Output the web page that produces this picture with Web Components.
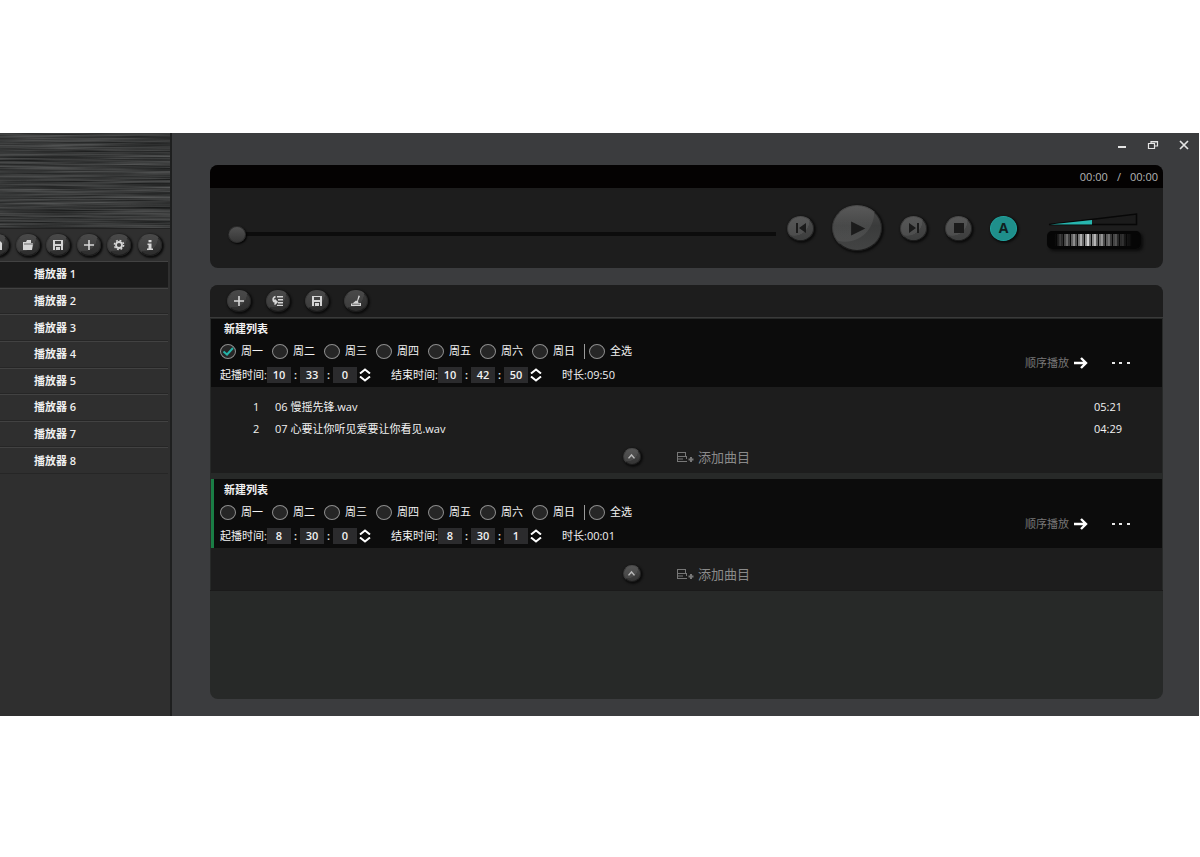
<!DOCTYPE html>
<html lang="zh-CN">
<head>
<meta charset="utf-8">
<title>播放器</title>
<style>
    * {
        box-sizing: border-box;
    }
    html {
        height: 100%;
    }
    body {
        margin: 0;
        height: 100%;
        padding: 133px 1px 141px 0;
        background: #fff;
        display: flex;
        font: 11px/16px "Open Sans", "Noto Sans CJK SC", sans-serif;
        color: #f2f2f2;
        --accent: #1f8f8b;
        --panel: #1d1d1d;
        --active: #1a7d45;
    }
</style>
</head>
<body>
<x-player-app></x-player-app>

<script>
const ICONS = {
    file: '<path d="M1 1h7l3 3v7H1z"/>',
    folder: '<path d="M1 3h3l1-2h4v3h2v1l-1 6H1z"/><path d="M2 5h9" stroke="#3a3a3a" stroke-width=".7"/>',
    save: '<path fill-rule="evenodd" d="M1 1h10v10H1zM3 2v3h6V2zM3 7v4h1V8h4v3h1V7z"/>',
    plus: '<path d="M5.200 1h1.600v4.200H11v1.600H6.800V11H5.200V6.800H1V5.200h4.200z"/>',
    gear: '<circle cx="6" cy="6" r="3" fill="none" stroke="currentColor" stroke-width="1.800"/><circle cx="6" cy="6" r="4.600" fill="none" stroke="currentColor" stroke-width="1.500" stroke-dasharray="1.800 1.812"/>',
    info: '<path d="M4.500 1h3v2.200h-3zM3.500 4.500h4v5H9V11H3V9.500h1.500V6h-1z"/>',
    indent: '<path d="M5 1h6v1.500H5zM6 4h5v1.500H6zM6 7h5v1.500H6zM5 9.800h6V11H5z"/><path d="M3.500 1.500C0 3 .5 7 4 7M2.500 4.500L5 7 2.500 9.500" fill="none" stroke="currentColor" stroke-width="1.600"/>',
    brush: '<path d="M8.500.5l1.500.5-2 5 .5 2H11v3H1V8.500h1.500L6 5.500l1 .5z"/><path d="M2 9.200h8" stroke="#333" stroke-width=".7"/>',
    prev: '<path d="M1 1h2v10H1zM11 1v10L4 6z"/>',
    play: '<path d="M1.500 1L11.500 6l-10 5z"/>',
    next: '<path d="M9 1h2v10H9zM1 1v10l7-5z"/>',
    stop: '<path d="M1 1h10v10H1z"/>',
    up: '<path d="M2 8.500L6 4l4 4.500" fill="none" stroke="currentColor" stroke-width="2"/>'
};

class RoundButton extends HTMLElement {
    constructor() {
        super();
        this.attachShadow({mode: 'open'});
    }

    connectedCallback() {
        const icon = this.getAttribute('icon');
        // the auto button carries a letter, every other one a drawing
        const face = icon === 'auto' ? 'A' : `<svg viewBox="0 0 12 12" fill="currentColor">${ICONS[icon]}</svg>`;

        this.shadowRoot.innerHTML = `
            <style>
            :host {
                display: block;
                flex: none;
                width: 24px;
                height: 22px;
                --icon: 12px;
                --face: linear-gradient(#3b3b3b, #2d2d2d);
                --ink: #d6d6d6;
            }
            :host([size="tiny"]) {
                width: 18px;
                height: 17px;
                --icon: 9px;
                --face: linear-gradient(#484848, #343434);
                --ink: #b8b8b8;
            }
            :host([size="medium"]) {
                width: 27px;
                height: 25px;
                --icon: 12px;
                --face: linear-gradient(#4a4a4a, #3d3e3e);
                --ink: #1b1b1b;
            }
            :host([size="large"]) {
                width: 50px;
                height: 46px;
                --icon: 17px;
                --face: linear-gradient(#4c4c4c, #3a3b3b 45%, #434444);
                --ink: #1b1b1b;
            }
            button {
                display: grid;
                place-items: center;
                width: 100%;
                height: 100%;
                padding: 0;
                border: 1px solid;
                border-color: #4a4a4a #262626 #1c1c1c #3a3a3a;
                border-radius: 50%;
                color: var(--ink);
                font: 700 14px/20px "Open Sans", sans-serif;
                background: radial-gradient(circle at 25% 15%, rgba(255, 255, 255, .07) 55%, transparent 57%), var(--face);
                box-shadow: 1px 1px 2px 1px #0c0c0c;
            }
            :host([icon="auto"]) button {
                border-color: #22a39e;
                background: var(--accent);
                color: #10201f;
            }
            svg {
                width: var(--icon);
                height: var(--icon);
            }
            </style>
            <button type="button" aria-label="${this.getAttribute('label')}">${face}</button>
        `;
    }
}

class WindowControls extends HTMLElement {
    constructor() {
        super();
        this.attachShadow({mode: 'open'});
        this.shadowRoot.innerHTML = `
            <style>
            :host {
                display: flex;
                justify-content: flex-end;
                gap: 15px;
                height: 28px;
                padding: 4px 7px 0 0;
            }
            button {
                width: 16px;
                height: 16px;
                padding: 2px;
                border: 0;
                background: none;
                color: #e4e4e4;
            }
            svg {
                display: block;
                width: 12px;
                height: 12px;
                fill: none;
                stroke: currentColor;
            }
            </style>
            <button type="button" aria-label="最小化"><svg viewBox="0 0 12 12"><path d="M2 8h8" stroke-width="2"/></svg></button>
            <button type="button" aria-label="还原"><svg viewBox="0 0 12 12"><path d="M1.500 4.500h6v5h-6zM4 4.500V2.500h6.500V7H8M4 3h6.500" stroke-width="1.200"/></svg></button>
            <button type="button" aria-label="关闭"><svg viewBox="0 0 12 12"><path d="M2 2l8 8M10 2l-8 8" stroke-width="1.700"/></svg></button>
        `;
    }
}

class PlayerSidebar extends HTMLElement {
    constructor() {
        super();
        this.attachShadow({mode: 'open'});
    }

    connectedCallback() {
        const count = Number(this.getAttribute('count'));
        const items = Array.from({length: count}, (_, i) => `
            <li><a href="#player-${i + 1}"${i === 0 ? ' aria-current="page"' : ''}>播放器 ${i + 1}</a></li>`).join('');

        this.shadowRoot.innerHTML = `
            <style>
            :host {
                display: flex;
                flex-direction: column;
                flex: none;
                width: 170px;
                overflow: hidden;
                background: #2f2f2f;
                border-right: 2px solid #1e1f1f;
            }
            .metal {
                display: block;
                width: 100%;
                height: 95px;
                border-bottom: 1px solid #222;
            }
            .tools {
                display: flex;
                justify-content: space-between;
                align-items: center;
                height: 32px;
                margin: 0 8px 0 -15px;
            }
            ul {
                display: grid;
                grid-auto-rows: 1fr;
                height: 213px;
                margin: 0;
                padding: 0 2px 0 0;
                list-style: none;
            }
            li {
                display: flex;
                border-top: 1px solid #424242;
                border-bottom: 1px solid #262626;
            }
            a {
                flex: 1;
                display: flex;
                align-items: center;
                padding-left: 34px;
                color: #f0f0f0;
                font-weight: 600;
                text-decoration: none;
            }
            a[aria-current] {
                background: #1b1b1b;
            }
            </style>
            <svg class="metal" preserveAspectRatio="none" aria-hidden="true">
                <filter id="brushed" x="0" y="0" width="100%" height="100%" color-interpolation-filters="sRGB">
                    <feTurbulence type="fractalNoise" baseFrequency="0.009 0.55" numOctaves="3" seed="7"/>
                    <feColorMatrix values=".36 0 0 0 .04  .36 0 0 0 .045  .36 0 0 0 .045  0 0 0 0 1"/>
                </filter>
                <rect width="100%" height="100%" filter="url(#brushed)"/>
            </svg>
            <div class="tools">
                <x-round-button icon="file" label="新建"></x-round-button>
                <x-round-button icon="folder" label="打开"></x-round-button>
                <x-round-button icon="save" label="保存"></x-round-button>
                <x-round-button icon="plus" label="添加"></x-round-button>
                <x-round-button icon="gear" label="设置"></x-round-button>
                <x-round-button icon="info" label="关于"></x-round-button>
            </div>
            <ul>${items}</ul>
        `;
    }
}

class VolumeWheel extends HTMLElement {
    constructor() {
        super();
        this.attachShadow({mode: 'open'});
        this.shadowRoot.innerHTML = `
            <style>
            :host {
                display: block;
                flex: none;
                width: 94px;
                padding-top: 4px;
            }
            svg {
                display: block;
                width: 92px;
                height: 14px;
                margin-bottom: 5px;
            }
            input {
                display: block;
                appearance: none;
                box-sizing: border-box;
                width: 94px;
                height: 18px;
                margin: 0;
                border-radius: 5px;
                background:
                    linear-gradient(90deg, #060606 6%, rgba(6, 6, 6, .6) 16%, transparent 44%, rgba(6, 6, 6, .5) 68%, #060606 92%),
                    repeating-linear-gradient(90deg, #0a0a0a 0 1px, #999 1px 3px, #d4d4d4 3px 5px, #6f6f6f 5px 7px);
                border: solid #060606;
                border-width: 3px 2px;
                box-shadow: 2px 2px 3px #0b0b0b;
            }
            input::-webkit-slider-thumb {
                appearance: none;
                width: 7px;
                height: 12px;
                background: transparent;
            }
            </style>
            <svg viewBox="0 0 92 14" aria-hidden="true">
                <path d="M2 12.500L89.500 2v10.500z" fill="#1b1b1b" stroke="#070707" stroke-width="1.500"/>
                <path d="M3 12.500L45 8v4.500z" fill="#27b5ae"/>
            </svg>
            <input type="range" min="0" max="100" value="50" aria-label="音量">
        `;
    }
}

class TransportPanel extends HTMLElement {
    constructor() {
        super();
        this.attachShadow({mode: 'open'});
        this.shadowRoot.innerHTML = `
            <style>
            :host {
                display: block;
                overflow: hidden;
                border-radius: 8px;
                background: var(--panel);
            }
            .clock {
                display: flex;
                justify-content: flex-end;
                align-items: center;
                gap: 9px;
                height: 23px;
                padding-right: 5px;
                background: #040202;
                color: #b4b4b4;
            }
            .controls {
                display: flex;
                align-items: center;
                gap: 18px;
                height: 80px;
                padding: 0 22px 0 18px;
            }
            .seek {
                flex: 1;
                appearance: none;
                height: 18px;
                margin: 12px -7px 0 0;
                background: linear-gradient(#0c0c0c, #0c0c0c) center / 100% 4px no-repeat;
            }
            .seek::-webkit-slider-thumb {
                appearance: none;
                width: 18px;
                height: 17px;
                border-radius: 50%;
                border: 1px solid #2c2c2c;
                background: linear-gradient(#515151, #363636);
                box-shadow: 1px 1px 2px #000;
            }
            x-volume-wheel {
                margin-left: 12px;
            }
            </style>
            <div class="clock"><span>00:00</span><span>/</span><span>00:00</span></div>
            <div class="controls">
                <input class="seek" type="range" min="0" max="100" value="0" aria-label="进度">
                <x-round-button size="medium" icon="prev" label="上一曲"></x-round-button>
                <x-round-button size="large" icon="play" label="播放"></x-round-button>
                <x-round-button size="medium" icon="next" label="下一曲"></x-round-button>
                <x-round-button size="medium" icon="stop" label="停止"></x-round-button>
                <x-round-button size="medium" icon="auto" label="自动"></x-round-button>
                <x-volume-wheel></x-volume-wheel>
            </div>
        `;
    }
}

class DayCheck extends HTMLElement {
    constructor() {
        super();
        this.attachShadow({mode: 'open'});
        this.shadowRoot.innerHTML = `
            <style>
            :host {
                display: block;
                width: 52px;
            }
            label {
                display: flex;
                align-items: center;
                gap: 5px;
                white-space: nowrap;
            }
            .box {
                display: grid;
            }
            .box > * {
                grid-area: 1 / 1;
            }
            input {
                appearance: none;
                box-sizing: border-box;
                width: 16px;
                height: 15px;
                margin: 0;
                border: 1px solid #8c8c8c;
                border-radius: 50%;
                background: #262626;
            }
            svg {
                width: 16px;
                height: 15px;
                visibility: hidden;
                pointer-events: none;
            }
            input:checked + svg {
                visibility: visible;
            }
            </style>
            <label>
                <span class="box">
                    <input type="checkbox">
                    <svg viewBox="0 0 16 15"><path d="M3.500 7.500L7 10.500l6-6.500" fill="none" stroke="#25b3a8" stroke-width="2"/></svg>
                </span>
                <slot></slot>
            </label>
        `;
    }

    connectedCallback() {
        this.shadowRoot.querySelector('input').checked = this.hasAttribute('checked');
    }
}

class TimeField extends HTMLElement {
    constructor() {
        super();
        this.attachShadow({mode: 'open'});
    }

    connectedCallback() {
        const units = ['时', '分', '秒'];
        const name = this.getAttribute('label');
        const boxes = this.getAttribute('value').split(':').map((value, i) =>
            `<input id="part${i}" type="text" inputmode="numeric" value="${value}" aria-label="${name}${units[i]}">`
        ).join('<span class="colon">:</span>');

        this.shadowRoot.innerHTML = `
            <style>
            :host {
                display: flex;
                align-items: center;
                width: 171px;
            }
            label {
                width: 47px;
                white-space: nowrap;
            }
            input {
                box-sizing: border-box;
                width: 24px;
                height: 16px;
                padding: 0;
                border: 0;
                background: #2b2b2d;
                color: #f2f2f2;
                font: inherit;
                font-weight: 600;
                text-align: center;
            }
            .colon {
                width: 9px;
                text-align: center;
                font-weight: 600;
            }
            .spin {
                display: grid;
                gap: 2px;
                margin-left: 2px;
            }
            button {
                width: 12px;
                height: 6px;
                padding: 0;
                border: 0;
                background: none;
                color: #fff;
            }
            svg {
                display: block;
                width: 12px;
                height: 6px;
                fill: none;
                stroke: currentColor;
                stroke-width: 2;
            }
            </style>
            <label for="part0">${name}:</label>
            ${boxes}
            <span class="spin">
                <button type="button" aria-label="增加"><svg viewBox="0 0 12 6"><path d="M1 5.500L6 1.500l5 4"/></svg></button>
                <button type="button" aria-label="减少"><svg viewBox="0 0 12 6"><path d="M1 .5l5 4 5-4"/></svg></button>
            </span>
        `;
    }
}

class PlayList extends HTMLElement {
    constructor() {
        super();
        this.attachShadow({mode: 'open'});
    }

    /**
     * @param {{name: string, days: number[], start: string, end: string, length: string, tracks: string[][]}} data
     */
    set data(data) {
        this._data = data;
        this.render();
    }

    render() {
        const {name, days, start, end, length, tracks} = this._data;
        const dayChecks = ['周一', '周二', '周三', '周四', '周五', '周六', '周日'].map((day, i) =>
            `<x-day-check${days.includes(i) ? ' checked' : ''}>${day}</x-day-check>`).join('');
        const rows = tracks.map(([title, time], i) =>
            `<tr><td class="no">${i + 1}</td><td>${title}</td><td class="time">${time}</td></tr>`).join('');

        this.shadowRoot.innerHTML = `
            <style>
            * {
                box-sizing: border-box;
            }
            :host {
                display: block;
                background: var(--panel);
            }
            header {
                display: flex;
                align-items: flex-end;
                justify-content: space-between;
                height: 68px;
                padding-left: 9px;
                background: #0c0c0c;
            }
            :host([active]) header {
                height: 69px;
                padding-left: 6px;
                border-left: 3px solid var(--active);
            }
            h2 {
                margin: 0;
                padding-left: 4px;
                font-size: 11px;
                line-height: 20px;
                font-weight: 700;
            }
            .row {
                display: flex;
                align-items: center;
                height: 24px;
            }
            .all {
                padding-left: 4px;
                border-left: 1px solid #9a9a9a;
                line-height: 14px;
            }
            .actions {
                display: flex;
                align-items: center;
                height: 48px;
                padding-right: 31px;
            }
            .actions button, .add {
                display: flex;
                align-items: center;
                padding: 0;
                border: 0;
                background: none;
                font: inherit;
                color: #777;
            }
            .order {
                gap: 5px;
                margin-right: 23px;
            }
            table {
                width: 100%;
                border-collapse: collapse;
            }
            td {
                height: 22px;
                padding: 0;
            }
            .no {
                width: 64px;
                padding-left: 42px;
            }
            .time {
                padding-right: 40px;
                text-align: right;
            }
            .body {
                padding-top: 9px;
            }
            footer {
                display: flex;
                align-items: center;
                justify-content: center;
                gap: 35px;
                height: 33px;
            }
            .add {
                gap: 4px;
                font-size: 13px;
                color: #8a8a8a;
            }
            </style>
            <header>
                <div>
                    <h2>${name}</h2>
                    <div class="row">${dayChecks}<x-day-check class="all">全选</x-day-check></div>
                    <div class="row">
                        <x-time-field label="起播时间" value="${start}"></x-time-field>
                        <x-time-field label="结束时间" value="${end}"></x-time-field>
                        <span>时长:${length}</span>
                    </div>
                </div>
                <div class="actions">
                    <button class="order" type="button">顺序播放
                        <svg width="14" height="12" viewBox="0 0 14 12" fill="none" stroke="#fff" stroke-width="2.400"><path d="M0 6h12M7 1l5 5-5 5"/></svg>
                    </button>
                    <button type="button" aria-label="更多">
                        <svg width="20" height="4" viewBox="0 0 20 4" fill="#e8e8e8"><path d="M1 1h3v2H1zM8 1h3v2H8zM16 1h3v2h-3z"/></svg>
                    </button>
                </div>
            </header>
            <div class="body">
                ${rows ? `<table>${rows}</table>` : ''}
                <footer>
                    <x-round-button size="tiny" icon="up" label="收起"></x-round-button>
                    <button class="add" type="button">
                        <svg width="18" height="12" viewBox="0 0 18 12" fill="none" stroke="#777"><path d="M1 1.500h9M1 10.500h10M1.500 1v9M9.500 1v5M1 5.500h10M10.500 6v2M1 8h6"/><path d="M15 6v5M12.500 8.500h5" stroke-width="2"/></svg>
                        添加曲目
                    </button>
                </footer>
            </div>
        `;
    }
}

class ListPanel extends HTMLElement {
    constructor() {
        super();
        this.attachShadow({mode: 'open'});
        this.shadowRoot.innerHTML = `
            <style>
            :host {
                display: flex;
                flex-direction: column;
                flex: 1;
                overflow: hidden;
                border-radius: 8px;
                background: #272928;
            }
            .tools {
                display: flex;
                align-items: center;
                gap: 15px;
                height: 33px;
                padding: 0 17px;
                box-sizing: border-box;
                border-bottom: 1px solid #3a3a3a;
                background: var(--panel);
            }
            .lists {
                display: grid;
                gap: 6px;
                padding: 1px 1px 0;
                border-bottom: 1px solid #1a1a1a;
            }
            </style>
            <div class="tools">
                <x-round-button icon="plus" label="新建列表"></x-round-button>
                <x-round-button icon="indent" label="导入列表"></x-round-button>
                <x-round-button icon="save" label="保存列表"></x-round-button>
                <x-round-button icon="brush" label="清空列表"></x-round-button>
            </div>
            <div class="lists"></div>
        `;
    }

    set lists(lists) {
        const holder = this.shadowRoot.querySelector('.lists');
        lists.forEach((data) => {
            const list = document.createElement('x-play-list');
            list.toggleAttribute('active', data.active);
            list.data = data;
            holder.appendChild(list);
        });
    }
}

class PlayerApp extends HTMLElement {
    constructor() {
        super();
        this.attachShadow({mode: 'open'});
        this.shadowRoot.innerHTML = `
            <style>
            :host {
                display: flex;
                flex: 1;
                min-width: 0;
                background: #3b3c3e;
            }
            main {
                flex: 1;
                display: flex;
                flex-direction: column;
                min-width: 0;
            }
            .panels {
                flex: 1;
                display: flex;
                flex-direction: column;
                gap: 17px;
                padding: 0 36px 17px 38px;
            }
            </style>
            <x-player-sidebar count="8"></x-player-sidebar>
            <main>
                <x-window-controls></x-window-controls>
                <div class="panels">
                    <x-transport-panel></x-transport-panel>
                    <x-list-panel></x-list-panel>
                </div>
            </main>
        `;
    }

    connectedCallback() {
        this.shadowRoot.querySelector('x-list-panel').lists = [
            {
                name: '新建列表',
                active: false,
                days: [0],
                start: '10:33:0',
                end: '10:42:50',
                length: '09:50',
                tracks: [['06 慢摇先锋.wav', '05:21'], ['07 心要让你听见爱要让你看见.wav', '04:29']]
            },
            {
                name: '新建列表',
                active: true,
                days: [],
                start: '8:30:0',
                end: '8:30:1',
                length: '00:01',
                tracks: []
            }
        ];
    }
}

customElements.define('x-round-button', RoundButton);
customElements.define('x-window-controls', WindowControls);
customElements.define('x-player-sidebar', PlayerSidebar);
customElements.define('x-volume-wheel', VolumeWheel);
customElements.define('x-transport-panel', TransportPanel);
customElements.define('x-day-check', DayCheck);
customElements.define('x-time-field', TimeField);
customElements.define('x-play-list', PlayList);
customElements.define('x-list-panel', ListPanel);
customElements.define('x-player-app', PlayerApp);
</script>
</body>
</html>
